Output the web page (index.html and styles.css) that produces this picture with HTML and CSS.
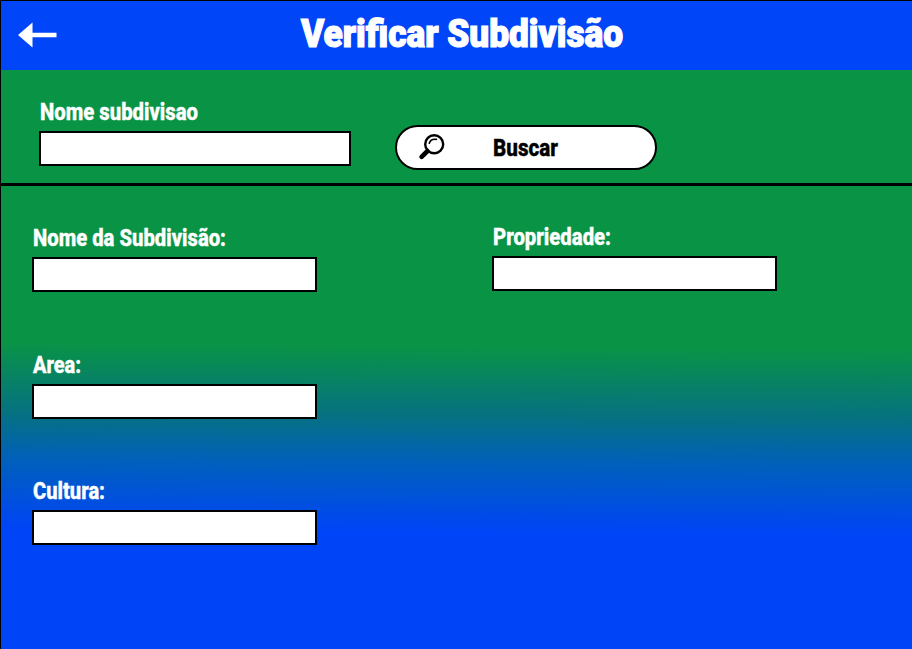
FILE: index.html
```html
<!DOCTYPE html>
<html lang="pt-BR">
<head>
<meta charset="utf-8">
<title>Verificar Subdivisão</title>
<link rel="stylesheet" href="styles.css">
</head>
<body>
<main class="screen">
  <header class="header">
    <svg class="back" viewBox="0 0 40 26" aria-label="Voltar"><path d="M0 13 14.5 0.5V10.8H38.5V15.2H14.5V25.5Z"/></svg>
    <svg class="title" role="heading"><text x="0" y="28" textLength="322" lengthAdjust="spacingAndGlyphs">Verificar Subdivisão</text></svg>
  </header>
  <form class="search">
    <label class="field field-wide">
      <svg class="caption"><text x="0" y="20" textLength="158" lengthAdjust="spacingAndGlyphs">Nome subdivisao</text></svg>
      <input type="text">
    </label>
    <button class="button" type="button">
      <svg class="lens" viewBox="0 0 26 26"><circle cx="15.2" cy="10.3" r="9"/><path class="handle" d="M8.5 17 2.6 22.8"/><path class="shine" d="M10.3 9.2C11.4 5.8 14.2 4.9 17.4 5.4"/></svg>
      <svg class="button-text"><text x="0" y="20" textLength="65" lengthAdjust="spacingAndGlyphs">Buscar</text></svg>
    </button>
  </form>
  <section class="details">
    <div class="column">
      <label class="field">
        <svg class="caption"><text x="0" y="20" textLength="193" lengthAdjust="spacingAndGlyphs">Nome da Subdivisão:</text></svg>
        <input type="text">
      </label>
      <label class="field">
        <svg class="caption"><text x="0" y="20" textLength="48" lengthAdjust="spacingAndGlyphs">Area:</text></svg>
        <input type="text">
      </label>
      <label class="field">
        <svg class="caption"><text x="0" y="20" textLength="72" lengthAdjust="spacingAndGlyphs">Cultura:</text></svg>
        <input type="text">
      </label>
    </div>
    <div class="column column-right">
      <label class="field">
        <svg class="caption"><text x="0" y="20" textLength="118" lengthAdjust="spacingAndGlyphs">Propriedade:</text></svg>
        <input type="text">
      </label>
    </div>
  </section>
</main>
</body>
</html>
```
FILE: styles.css
```css
* { box-sizing: border-box; }
body { margin: 0; font-family: Roboto, "Liberation Sans", sans-serif; }
.screen {
  width: 912px;
  height: 649px;
  overflow: hidden;
  border: solid #000;
  border-width: 1px 0 0 1px;
  background: linear-gradient(180.4deg, #099445 0, #099445 347px, #067083 420px, #0060bc 466px, #0044f7 534px, #0044f7 100%);
}
svg { display: block; overflow: visible; }
.header {
  height: 69px;
  display: flex;
  align-items: flex-start;
  padding: 18px 0 0 17px;
  background: #0046f8;
}
.back { width: 40px; height: 26px; margin-top: 2.5px; fill: #fff; }
.title {
  width: 322px;
  height: 36px;
  margin-left: 243px;
  fill: #fff;
  stroke: #fff;
  stroke-width: 1.2;
  font-size: 38px;
  font-weight: 900;
}
.search {
  height: 116px;
  display: flex;
  align-items: flex-start;
  gap: 44px;
  padding: 30px 0 0 38px;
  border-bottom: 3px solid #000;
}
.field { display: block; width: 285px; }
.field-wide { width: 312px; }
.caption {
  width: 100%;
  height: 31px;
  padding-left: 1px;
  fill: #fff;
  stroke: #fff;
  stroke-width: 0.4;
  font-size: 24px;
  font-weight: 800;
}
input {
  display: block;
  width: 100%;
  height: 35px;
  margin: 0;
  padding: 0 8px;
  border: 2px solid #000;
  border-radius: 0;
  background: #fff;
  font: 700 18px Roboto, sans-serif;
}
.button {
  display: flex;
  align-items: flex-start;
  width: 262px;
  height: 45px;
  margin: 24.5px 0 0;
  padding: 7px 0 0 22px;
  border: 2px solid #000;
  border-radius: 23px;
  background: #fff;
  color: #000;
  font-family: inherit;
}
.lens { width: 26px; height: 26px; fill: none; stroke: #000; stroke-width: 2.4; stroke-linecap: round; }
.handle { stroke-width: 4.6; }
.shine { stroke-width: 1.6; }
.button-text {
  width: 65px;
  height: 28px;
  margin: 2px 0 0 47.5px;
  stroke: #000;
  stroke-width: 0.4;
  font-size: 24px;
  font-weight: 800;
}
.details { display: flex; gap: 175px; padding: 40.4px 0 0 31px; }
.column { display: flex; flex-direction: column; gap: 60.5px; }
.column-right { margin-top: -1.3px; }
```
